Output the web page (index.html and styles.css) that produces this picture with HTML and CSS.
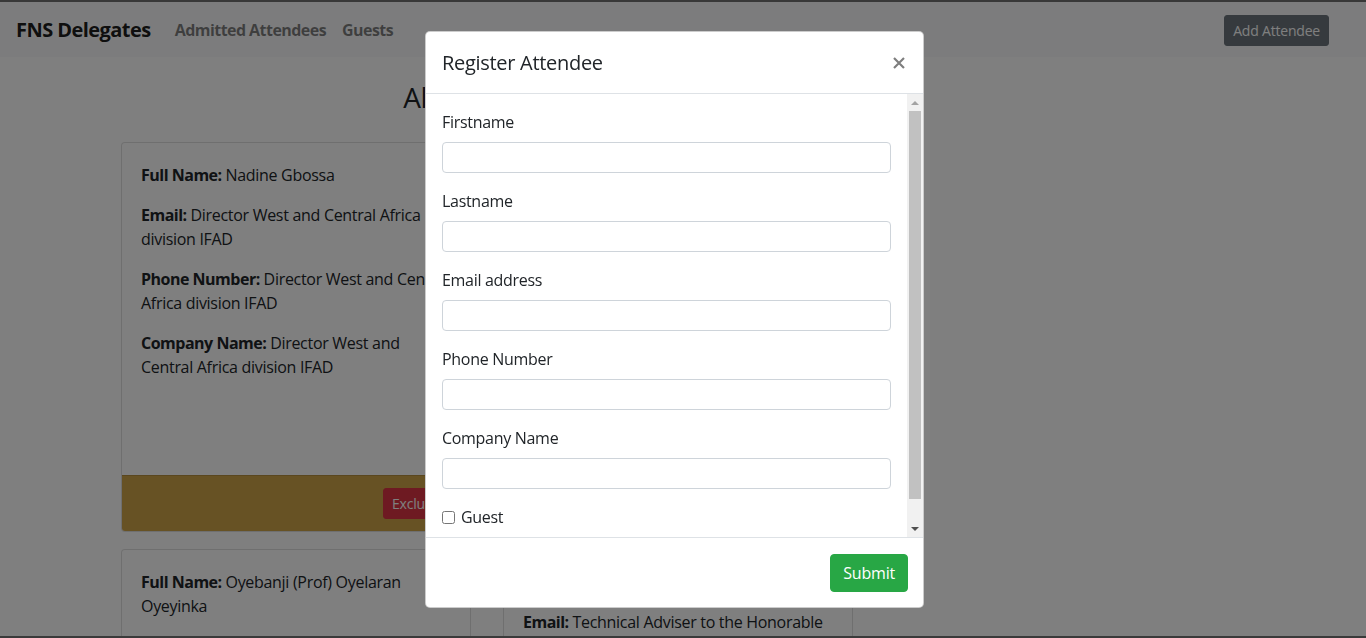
FILE: index.html
```html
<!DOCTYPE html>
<html lang="en">
<head>
<meta charset="utf-8">
<title>FNS Delegates</title>
<link rel="stylesheet" href="styles.css">
</head>
<body>
<div class="page">
  <nav class="navbar">
    <a class="brand" href="#">FNS Delegates</a>
    <ul class="nav">
      <li><a class="nav-link" href="#">Admitted Attendees</a></li>
      <li><a class="nav-link" href="#">Guests</a></li>
    </ul>
    <button class="btn btn-secondary btn-sm nav-btn">Add Attendee</button>
  </nav>

  <main class="main">
    <h3 class="title">All Attendees</h3>
    <div class="grid">
      <div class="card">
        <div class="card-body">
          <p><b>Full Name:</b> Nadine Gbossa</p>
          <p><b>Email:</b> Director West and Central Africa division IFAD</p>
          <p><b>Phone Number:</b> Director West and Central Africa division IFAD</p>
          <p><b>Company Name:</b> Director West and Central Africa division IFAD</p>
        </div>
        <div class="card-footer">
          <button class="btn btn-danger btn-sm">Exclude</button>
        </div>
      </div>
      <div class="card">
        <div class="card-body">
          <p><b>Full Name:</b> Ibrahim Mayaki</p>
          <p><b>Email:</b> Chief Executive Officer, AUDA-NEPAD</p>
          <p><b>Phone Number:</b> Chief Executive Officer, AUDA-NEPAD</p>
          <p><b>Company Name:</b> Chief Executive Officer, AUDA-NEPAD</p>
        </div>
        <div class="card-footer">
          <button class="btn btn-danger btn-sm">Exclude</button>
        </div>
      </div>
      <div class="card">
        <div class="card-body">
          <p><b>Full Name:</b> Oyebanji (Prof) Oyelaran Oyeyinka</p>
          <p><b>Email:</b> Senior Special Adviser on Industrialization</p>
        </div>
      </div>
      <div class="card">
        <div class="card-body">
          <p><b>Full Name:</b> Olusegun Aganga</p>
          <p><b>Email:</b> Technical Adviser to the Honorable</p>
        </div>
      </div>
    </div>
  </main>
</div>

<div class="backdrop"></div>

<div class="modal">
  <div class="modal-content">
    <div class="modal-header">
      <h5 class="modal-title">Register Attendee</h5>
      <button class="close" aria-label="Close">
        <svg width="12" height="12" viewBox="0 0 12 12" aria-hidden="true">
          <path d="M1 1L11 11M11 1L1 11" stroke="currentColor" stroke-width="2.2" stroke-linecap="butt"/>
        </svg>
      </button>
    </div>
    <div class="modal-body">
      <div class="modal-scroll">
        <div class="form-group">
          <label for="fn">Firstname</label>
          <input class="form-control" id="fn" type="text">
        </div>
        <div class="form-group">
          <label for="ln">Lastname</label>
          <input class="form-control" id="ln" type="text">
        </div>
        <div class="form-group">
          <label for="em">Email address</label>
          <input class="form-control" id="em" type="email">
        </div>
        <div class="form-group">
          <label for="ph">Phone Number</label>
          <input class="form-control" id="ph" type="text">
        </div>
        <div class="form-group">
          <label for="co">Company Name</label>
          <input class="form-control" id="co" type="text">
        </div>
        <div class="form-group form-check">
          <input class="check" id="gu" type="checkbox">
          <label class="check-label" for="gu">Guest</label>
        </div>
      </div>
      <div class="scrollbar" aria-hidden="true">
        <div class="sb-btn"><span class="arrow-up"></span></div>
        <div class="sb-track"><div class="sb-thumb"></div></div>
        <div class="sb-btn"><span class="arrow-down"></span></div>
      </div>
    </div>
    <div class="modal-footer">
      <button class="btn btn-success">Submit</button>
    </div>
  </div>
</div>

<div class="frame"></div>
</body>
</html>
```

FILE: styles.css
```css
* { box-sizing: border-box; }

html, body {
  margin: 0;
  height: 100%;
}

body {
  font-family: "Segoe UI", "Open Sans", "Noto Sans", sans-serif;
  font-size: 16px;
  line-height: 1.5;
  letter-spacing: -0.3px;
  color: #212529;
  background: #fff;
  overflow: hidden;
}

b, strong { letter-spacing: -0.5px; }

.page {
  border-top: 2px solid #707070;
}

/* Navbar */
.navbar {
  display: flex;
  align-items: center;
  height: 55px;
  padding: 0 37px 0 16px;
  background: #f8f9fa;
}

.brand {
  font-size: 20px;
  font-weight: 700;
  letter-spacing: -0.55px;
  color: rgba(0, 0, 0, 0.9);
  text-decoration: none;
  margin-right: 16px;
  line-height: 30px;
}

.nav {
  display: flex;
  list-style: none;
  margin: 0;
  padding: 0;
  flex: 1;
}

.nav-link {
  display: block;
  padding: 8px 8px;
  font-weight: 700;
  letter-spacing: -0.55px;
  color: rgba(0, 0, 0, 0.5);
  text-decoration: none;
}

.btn {
  display: inline-block;
  font-family: inherit;
  font-size: 16px;
  line-height: 1.5;
  letter-spacing: -0.2px;
  padding: 6px 12px;
  border: 1px solid transparent;
  border-radius: 4px;
  color: #fff;
  cursor: pointer;
}

.btn-sm {
  font-size: 14px;
  padding: 4px 8px;
  line-height: 21px;
  border-radius: 3px;
}

.nav-btn { margin-top: 2px; }

.btn-secondary { background: #6c757d; border-color: #6c757d; }
.btn-danger { background: #dc3545; border-color: #dc3545; }
.btn-success { background: #28a745; border-color: #28a745; }

/* Main */
.main {
  padding-top: 23px;
  margin-left: 121px;
  width: 732px;
}

.title {
  margin: 0 0 28px;
  text-align: center;
  font-size: 28px;
  font-weight: 500;
  line-height: 34px;
}

.grid {
  display: grid;
  grid-template-columns: 350px 350px;
  column-gap: 32px;
  row-gap: 17px;
}

.card {
  display: flex;
  flex-direction: column;
  border: 1px solid rgba(0, 0, 0, 0.125);
  border-radius: 4px;
  background: #fff;
}

.card-body {
  flex: 1;
  padding: 20px 19px 4px;
  min-height: 332px;
}

.card-body p {
  margin: 0 0 16px;
}

.card-footer {
  padding: 12px 20px;
  background: #cea448;
  border-top: 1px solid rgba(0, 0, 0, 0.125);
  text-align: right;
  border-radius: 0 0 3px 3px;
}

/* Modal */
.backdrop {
  position: fixed;
  inset: 0;
  background: rgba(0, 0, 0, 0.5);
}

.modal {
  position: fixed;
  inset: 0;
  display: flex;
  justify-content: center;
  align-items: flex-start;
  padding: 31px 17px 0 0;
}

.modal-content {
  width: 499px;
  background: #fff;
  border: 1px solid rgba(0, 0, 0, 0.2);
  border-radius: 5px;
  display: flex;
  flex-direction: column;
}

.modal-header {
  display: flex;
  align-items: flex-start;
  justify-content: space-between;
  padding: 16px 15px 15px 16px;
  border-bottom: 1px solid #dee2e6;
}

.modal-title {
  margin: 0;
  font-size: 20px;
  font-weight: 500;
  line-height: 30px;
}

.close {
  display: flex;
  align-items: center;
  justify-content: center;
  background: none;
  border: 0;
  padding: 0;
  margin: 0 2px 0 0;
  width: 14px;
  height: 30px;
  color: #000;
  opacity: 0.5;
  cursor: pointer;
}

.modal-body {
  display: flex;
  height: 443px;
  overflow: hidden;
}

.modal-scroll {
  flex: 1;
  padding: 16px 16px 16px 16px;
  overflow: hidden;
}

.scrollbar {
  width: 16px;
  display: flex;
  flex-direction: column;
  background: #f1f1f1;
}

.sb-btn {
  height: 17px;
  display: flex;
  align-items: center;
  justify-content: center;
}

.arrow-up {
  width: 0;
  height: 0;
  border-left: 4px solid transparent;
  border-right: 4px solid transparent;
  border-bottom: 4px solid #a3a3a3;
}

.arrow-down {
  width: 0;
  height: 0;
  border-left: 4px solid transparent;
  border-right: 4px solid transparent;
  border-top: 4px solid #505050;
}

.sb-track {
  flex: 1;
  padding: 0 2px 21px;
  display: flex;
}

.sb-thumb {
  flex: 1;
  background: #c1c1c1;
}

.form-group {
  margin-bottom: 16px;
}

label {
  display: block;
  margin-bottom: 8px;
}

.form-control {
  display: block;
  width: 100%;
  height: 31px;
  padding: 4px 12px;
  font-family: inherit;
  font-size: 16px;
  border: 1px solid #ced4da;
  border-radius: 4px;
  background: #fff;
}

.form-check {
  display: flex;
  align-items: center;
  gap: 6px;
}

.check {
  margin: 0;
  width: 13px;
  height: 13px;
}

.check-label {
  margin: 0;
}

.modal-footer {
  display: flex;
  justify-content: flex-end;
  padding: 16px 15px 15px;
  border-top: 1px solid #dee2e6;
}

.frame {
  position: fixed;
  left: 0;
  right: 0;
  bottom: 0;
  height: 2px;
  background: #3a3a3a;
}
```
